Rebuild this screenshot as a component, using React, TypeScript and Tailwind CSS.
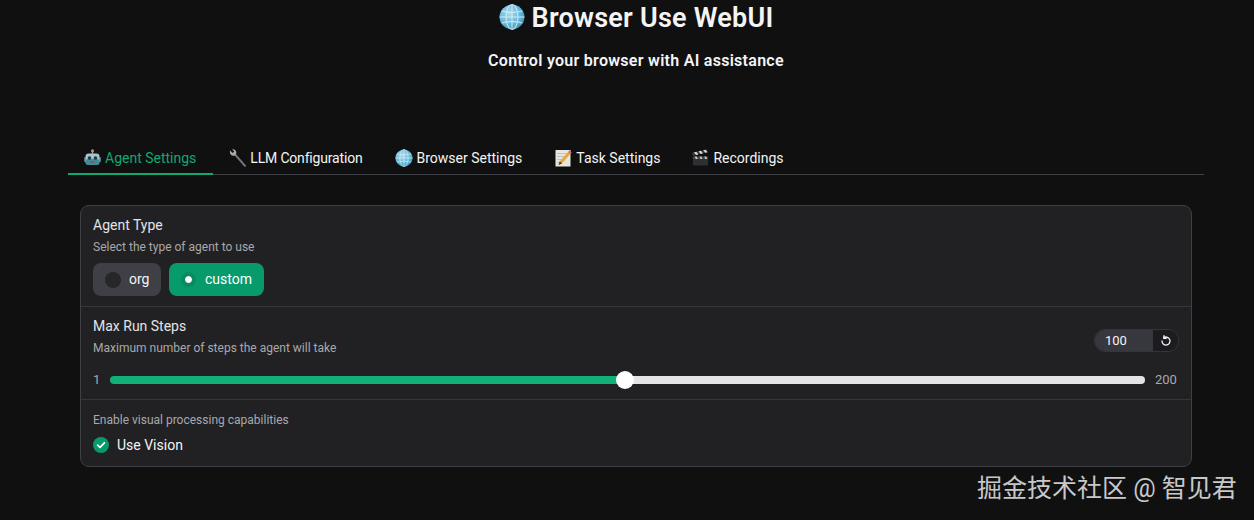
import React from "react";

const Globe = ({ size }: { size: number }) => (
  <svg width={size} height={size} viewBox="0 0 24 24" className="shrink-0">
    <defs>
      <radialGradient id={`g${size}`} cx="40%" cy="35%" r="70%">
        <stop offset="0%" stopColor="#a9dcf0" />
        <stop offset="70%" stopColor="#5bb3d6" />
        <stop offset="100%" stopColor="#3a8fb5" />
      </radialGradient>
    </defs>
    <circle cx="12" cy="12" r="11.5" fill={`url(#g${size})`} />
    <g fill="none" stroke="#d8eef6" strokeWidth="1" opacity="0.85">
      <ellipse cx="12" cy="12" rx="5.5" ry="11.5" />
      <line x1="12" y1="0.5" x2="12" y2="23.5" />
      <line x1="0.5" y1="12" x2="23.5" y2="12" />
      <path d="M2.5 6.5 Q12 9 21.5 6.5" />
      <path d="M2.5 17.5 Q12 15 21.5 17.5" />
    </g>
  </svg>
);

const Robot = () => (
  <svg width="17" height="18" viewBox="0 0 17 18" className="shrink-0">
    <circle cx="8.5" cy="1.8" r="1.5" fill="#d9924a" />
    <rect x="7.8" y="2.5" width="1.4" height="2.5" fill="#8a9aa3" />
    <rect x="0" y="8" width="2" height="5" rx="1" fill="#5b7480" />
    <rect x="15" y="8" width="2" height="5" rx="1" fill="#5b7480" />
    <rect x="1.5" y="4.5" width="14" height="11" rx="3" fill="#a6c3ce" />
    <rect x="1.5" y="10" width="14" height="6" rx="2.5" fill="#3f8c9c" />
    <circle cx="5.5" cy="9" r="1.8" fill="#1b3a46" />
    <circle cx="11.5" cy="9" r="1.8" fill="#1b3a46" />
    <rect x="6" y="12.3" width="5" height="1.4" rx="0.7" fill="#9a4d50" />
  </svg>
);

const Wrench = () => (
  <svg width="18" height="18" viewBox="0 0 18 18" className="shrink-0">
    <path d="M16 16.8 L6.4 5.8" stroke="#77797d" strokeWidth="2" strokeLinecap="round" />
    <path
      d="M1 1.6 L3.8 3.9 L5.2 2.6 L3 0.3 C5 -0.2 7 1 7.3 3.2 C7.4 4.2 7.2 5 6.8 5.6 L5.6 6.8 C4.4 7 3 6.8 2 5.8 C1 4.8 0.7 3 1 1.6 Z"
      fill="#a8abae"
    />
  </svg>
);

const Memo = () => (
  <svg width="17" height="18" viewBox="0 0 17 18" className="shrink-0">
    <rect x="0.5" y="1" width="15" height="16.5" fill="#e8e6df" />
    <g stroke="#b6b3c4" strokeWidth="0.8">
      <line x1="2" y1="4.5" x2="13" y2="4.5" />
      <line x1="2" y1="7.5" x2="11" y2="7.5" />
      <line x1="2" y1="10.5" x2="8" y2="10.5" />
      <line x1="2" y1="13.5" x2="6" y2="13.5" />
    </g>
    <path d="M14.5 1.5 L16.5 3.4 L7 14.5 L3.5 16 L4.8 12.3 Z" fill="#e9a93a" />
    <path d="M14.5 1.5 L16.5 3.4 L15.2 4.9 L13.2 3 Z" fill="#e0637a" />
    <path d="M4.8 12.3 L3.5 16 L7 14.5 Z" fill="#4a3a2a" />
  </svg>
);

const Clapper = () => (
  <svg width="17" height="18" viewBox="0 0 18 18" className="shrink-0">
    <rect x="1" y="7.5" width="16" height="9.5" rx="0.8" fill="#2e2f33" />
    <rect x="1" y="7.5" width="16" height="2.6" fill="#45464a" />
    <g transform="rotate(-13 1 7)">
      <rect x="1" y="3.4" width="16" height="3.2" fill="#3d3e42" />
      <path d="M3 3.4 H5.5 L7 6.6 H4.5 Z M8 3.4 H10.5 L12 6.6 H9.5 Z M13 3.4 H15.5 L17 6.6 H14.5 Z" fill="#d9d9d9" />
    </g>
    <path d="M3 7.5 H5 L6 10 H4 Z M8 7.5 H10 L11 10 H9 Z M13 7.5 H15 L16 10 H14 Z" fill="#c9c9c9" />
  </svg>
);

const Sans = "font-['Roboto','Noto_Sans_CJK_SC',sans-serif]";

export default function App() {
  return (
    <div className={`relative h-[520px] w-[1254px] overflow-hidden bg-[#101011] pl-[68px] pr-[50px] text-white ${Sans}`}>
      <div className="flex h-[34px] items-center justify-center gap-[7px]">
        <Globe size={26} />
        <h1 className="mt-[1px] text-[27px] font-semibold leading-[34px] tracking-[0.24px] text-[#f4f4f5]">Browser Use WebUI</h1>
      </div>
      <p className="mt-[15px] text-center text-[16px] font-semibold leading-6 tracking-[0.28px] text-[#f4f4f5]">
        Control your browser with AI assistance
      </p>

      <div className="mt-[66px] flex h-[36px] border-b border-[#3f3f46] text-[14px] text-[#f4f4f5]">
        <div className="-mb-px flex h-[36px] items-center gap-[4px] border-b-2 border-[#10a86f] pl-[16px] pr-[17px] pt-[4px] text-[#10a86f]">
          <Robot />
          <span>Agent Settings</span>
        </div>
        <div className="flex h-[36px] items-center gap-[3px] px-[16px] pt-[2px]">
          <Wrench />
          <span className="tracking-[-0.18px]">LLM Configuration</span>
        </div>
        <div className="flex h-[36px] items-center gap-[4px] pl-[16px] pr-[17px] pt-[2px]">
          <Globe size={18} />
          <span>Browser Settings</span>
        </div>
        <div className="flex h-[36px] items-center gap-[4px] px-[16px] pt-[2px]">
          <Memo />
          <span>Task Settings</span>
        </div>
        <div className="flex h-[36px] items-center gap-[4px] px-[16px] pt-[2px]">
          <Clapper />
          <span>Recordings</span>
        </div>
      </div>

      <div className="ml-[12px] mr-[12px] mt-[30px] flex h-[262px] flex-col rounded-[9px] border border-[#3f3f46] bg-[#212123]">
        <section className="h-[101px] border-b border-[#36363b] px-[12px] pt-[10px]">
          <h3 className="text-[14px] leading-[18px] text-[#e4e4e7]">Agent Type</h3>
          <p className="mt-[4px] text-[12px] leading-[18px] text-[#a8a8ad]">Select the type of agent to use</p>
          <div className="mt-[7px] flex gap-[8px]">
            <div className="flex h-[33px] w-[68px] items-center gap-[8px] rounded-[8px] bg-[#3f3f46] pl-[12px] text-[14px] text-[#f4f4f5]">
              <span className="h-[16px] w-[16px] rounded-full bg-[#27272a]" />
              org
            </div>
            <div className="flex h-[33px] w-[95px] items-center gap-[13px] rounded-[8px] bg-[#079a6b] pl-[16px] text-[14px] text-white">
              <span className="h-[7px] w-[7px] rounded-full bg-white outline-[4px] outline-[#0b8a62]" />
              custom
            </div>
          </div>
        </section>

        <section className="h-[93px] border-b border-[#36363b] px-[12px] pt-[10px]">
          <div className="flex items-start justify-between">
            <div>
              <h3 className="text-[14px] leading-[18px] text-[#e4e4e7]">Max Run Steps</h3>
              <p className="mt-[4px] text-[12px] leading-[18px] text-[#a8a8ad]">
                Maximum number of steps the agent will take
              </p>
            </div>
            <div className="mt-[12px] flex h-[23px] w-[85px] overflow-hidden rounded-[11px] border border-[#34343a] text-[13px]">
              <div className="flex w-[58px] items-center bg-[#37373e] pl-[10px] text-[#f4f4f5]">100</div>
              <div className="flex flex-1 items-center justify-center bg-[#1c1c20]">
                <svg width="12" height="12" viewBox="0 0 24 24" fill="none" stroke="#f4f4f5" strokeWidth="2.6" strokeLinecap="round" strokeLinejoin="round">
                  <path d="M4 12a8 8 0 1 0 3-6.2" />
                  <path d="M8 1.5 L7.5 6.5 L12.5 6.5" />
                </svg>
              </div>
            </div>
          </div>
          <div className="mt-[14px] flex h-[18px] items-center text-[13px] text-[#a8a8ad]">
            <span className="w-[17px] shrink-0">1</span>
            <div className="relative flex h-[8px] w-[1035px] shrink-0">
              <div className="w-[515px] rounded-l-full bg-[#10b077]" />
              <div className="flex-1 rounded-r-full bg-[#e4e4e7]" />
              <span className="absolute left-[506px] top-[-5px] h-[18px] w-[18px] rounded-full bg-white" />
            </div>
            <span className="ml-[10px]">200</span>
          </div>
        </section>

        <section className="flex-1 px-[12px] pt-[11px]">
          <p className="text-[12px] leading-[18px] text-[#a8a8ad]">Enable visual processing capabilities</p>
          <div className="mt-[7px] flex items-center gap-[8px] text-[14px] leading-[18px] text-[#f4f4f5]">
            <svg width="16" height="16" viewBox="0 0 16 16">
              <circle cx="8" cy="8" r="8" fill="#079a6b" />
              <path d="M4.6 8.2 L7 10.4 L11.4 5.8" fill="none" stroke="#fff" strokeWidth="1.8" strokeLinecap="round" strokeLinejoin="round" />
            </svg>
            Use Vision
          </div>
        </section>
      </div>

      <div className="absolute left-[977px] top-[474px] text-[25px] leading-[30px] text-[#c8c8c8]">
        掘金技术社区 @ 智见君
      </div>
    </div>
  );
}
